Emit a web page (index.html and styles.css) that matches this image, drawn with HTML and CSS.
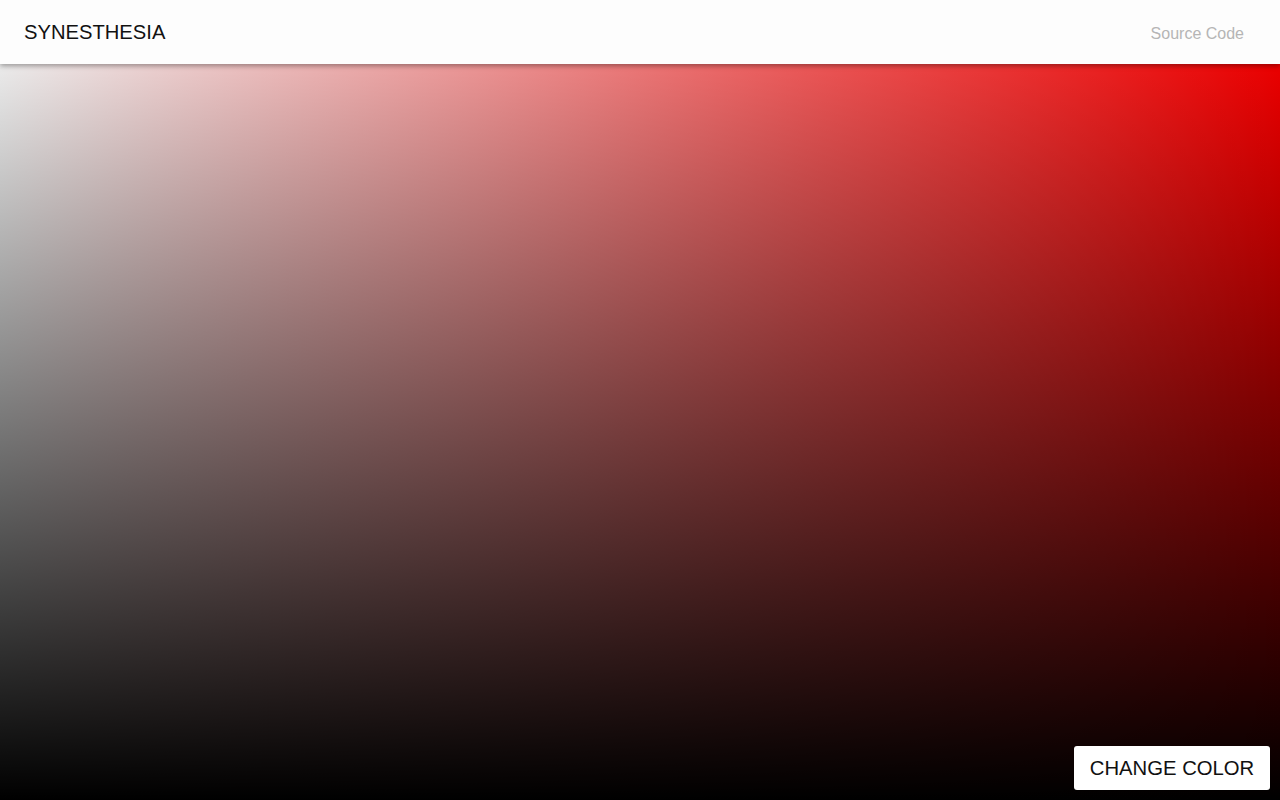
FILE: index.html
```html
<!DOCTYPE html>
<html>
<head>
<meta charset="utf-8">
<link rel="stylesheet" href="styles.css">
</head>
<body>
<div class="canvas">
  <div class="shade"></div>
</div>
<header class="bar">
  <div class="title">SYNESTHESIA</div>
  <a class="source">Source Code</a>
</header>
<button class="change">CHANGE COLOR</button>
</body>
</html>
```
FILE: styles.css
```css
html, body {
  margin: 0;
  padding: 0;
  width: 1280px;
  height: 800px;
  overflow: hidden;
  font-family: "Liberation Sans", Arial, sans-serif;
}
.canvas {
  position: absolute;
  inset: 0;
  background: linear-gradient(to right, #ffffff, #ff0000);
}
.shade {
  width: 100%;
  height: 100%;
  background: linear-gradient(to bottom, rgba(0,0,0,0), #000000);
}
.bar {
  position: relative;
  height: 64px;
  background: #fdfdfd;
  box-shadow: 0 2px 5px rgba(0,0,0,0.35);
  display: flex;
  align-items: center;
  justify-content: space-between;
  padding: 0 36px 0 24px;
  box-sizing: border-box;
}
.title {
  font-size: 20.2px;
  color: #111;
}
.source {
  font-size: 16px;
  color: #b5b5b5;
  padding-top: 4px;
}
.change {
  position: absolute;
  right: 10px;
  bottom: 10px;
  width: 196px;
  height: 44px;
  background: #fff;
  border: none;
  border-radius: 3px;
  box-shadow: 0 0 1px rgba(0,0,0,0.3);
  font-family: "Liberation Sans", Arial, sans-serif;
  font-size: 20.3px;
  color: #111;
  padding: 0;
}
```
